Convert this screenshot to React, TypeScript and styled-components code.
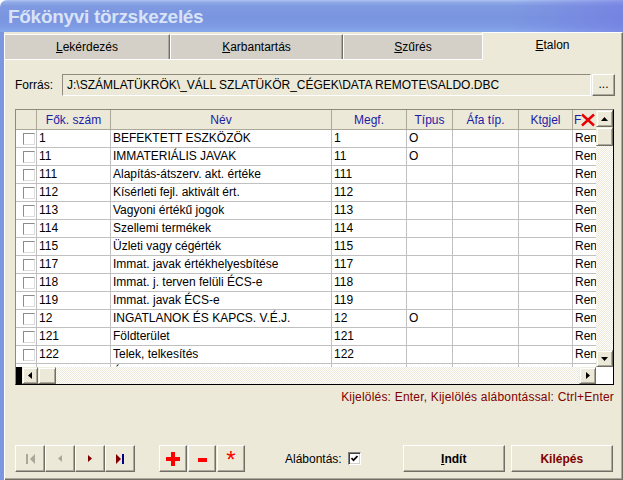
import React from "react";
import styled, { createGlobalStyle } from "styled-components";

const face = "#ece9d8";

const GlobalStyle = createGlobalStyle`
  html, body {
    margin: 0;
    padding: 0;
    background: #ffffff;
  }
  body {
    font-family: "Liberation Sans", Arial, sans-serif;
    font-size: 12px;
    color: #000;
  }
  * {
    box-sizing: border-box;
  }
`;

const Window = styled.div`
  width: 623px;
  height: 480px;
  display: flex;
  flex-direction: column;
  overflow: hidden;
`;

const TitleBar = styled.div`
  flex: none;
  height: 32px;
  display: flex;
  align-items: center;
  padding: 2px 0 0 8px;
  border-top-left-radius: 7px;
  background:
    linear-gradient(to right, rgba(120, 120, 230, 0) 82%, rgba(110, 108, 226, 0.45) 100%),
    linear-gradient(to bottom, #aec3f2 0px, #93ade9 2px, #7f9ae1 6px, #7a95df 18px, #7d9ae3 26px, #88a8ec 32px);
  color: #d9e3f7;
  font: bold 19px "Liberation Sans", Arial, sans-serif;
  letter-spacing: -0.3px;
  white-space: nowrap;
`;

const Body = styled.div`
  flex: 1;
  min-height: 0;
  display: flex;
  flex-direction: column;
  border-left: 4px solid #7b97e0;
  background: ${face};
`;

const TabStrip = styled.div`
  flex: none;
  height: 27px;
  display: flex;
  align-items: flex-end;
`;

const Tab = styled.div<{ $w: number; $active?: boolean; $noRight?: boolean }>`
  width: ${(p) => p.$w}px;
  height: ${(p) => (p.$active ? 28 : 25)}px;
  margin-bottom: ${(p) => (p.$active ? -1 : 0)}px;
  position: relative;
  z-index: ${(p) => (p.$active ? 1 : 0)};
  background: ${(p) => (p.$active ? face : "#d4d0c8")};
  border-top: 1px solid #fff;
  border-left: 1px solid #fff;
  border-right: ${(p) => (p.$noRight ? "none" : "1px solid #716f64")};
  box-shadow: ${(p) => (p.$noRight ? "none" : "inset -1px 0 #aca899")};
  display: flex;
  align-items: center;
  justify-content: center;
  padding-bottom: ${(p) => (p.$active ? 3 : 0)}px;
  font-size: 12px;
`;

const Panel = styled.div`
  flex: 1;
  min-height: 0;
  display: flex;
  flex-direction: column;
  background: ${face};
  border-top: 1px solid #fff;
  border-left: 1px solid #fff;
  box-shadow: inset -1px -1px #716f64, inset -2px -2px #aca899;
  padding: 13px 8px 0 10px;
`;

const SourceRow = styled.div`
  display: flex;
  align-items: center;
  height: 23px;
`;

const SourceLabel = styled.span`
  width: 47px;
  flex: none;
`;

const SourceInput = styled.div`
  width: 530px;
  height: 22px;
  display: flex;
  align-items: center;
  padding-left: 4px;
  background: ${face};
  border: 1px solid;
  border-color: #8e8b7e #fff #fff #8e8b7e;
  white-space: nowrap;
  overflow: hidden;
`;

const Button = styled.button<{ $w: number; $color?: string; $bold?: boolean }>`
  width: ${(p) => p.$w}px;
  height: 27px;
  flex: none;
  margin: 0;
  padding: 0;
  display: flex;
  align-items: center;
  justify-content: center;
  background: ${face};
  border: 1px solid;
  border-color: #fff #716f64 #716f64 #fff;
  box-shadow: inset -1px -1px #aca899;
  font-family: "Liberation Sans", Arial, sans-serif;
  font-size: 12px;
  font-weight: ${(p) => (p.$bold ? "bold" : "normal")};
  color: ${(p) => p.$color || "#000"};
`;

const BrowseButton = styled(Button)`
  height: 22px;
  margin-left: 1px;
  padding-bottom: 2px;
`;

const GridFrame = styled.div`
  margin-top: 13px;
  width: 599px;
  height: 276px;
  flex: none;
  border: 1px solid;
  border-color: #8e8b7e #000 #000 #8e8b7e;
  display: grid;
  grid-template-columns: 1fr 17px;
  grid-template-rows: 1fr 17px;
  background: #fff;
`;

const Viewport = styled.div`
  overflow: hidden;
  min-width: 0;
  min-height: 0;
`;

const cols = "21px 74px 221px 75px 46px 66px 54px 80px";

const HeadRow = styled.div`
  display: grid;
  grid-template-columns: ${cols};
  height: 20px;
  background: ${face};
  border-bottom: 1px solid #aca899;
`;

const HeadCell = styled.div<{ $left?: boolean }>`
  display: flex;
  align-items: center;
  justify-content: ${(p) => (p.$left ? "flex-start" : "center")};
  padding-left: ${(p) => (p.$left ? 1 : 0)}px;
  border-right: 1px solid #aca899;
  color: #1c1ca6;
  white-space: nowrap;
  overflow: hidden;
`;

const Row = styled.div`
  display: grid;
  grid-template-columns: ${cols};
  height: 18px;
`;

const Cell = styled.div`
  border-right: 1px solid #c0c0c0;
  border-bottom: 1px solid #c0c0c0;
  padding-left: 2px;
  line-height: 17px;
  white-space: nowrap;
  overflow: hidden;
`;

const CheckCell = styled(Cell)`
  display: flex;
  align-items: center;
  justify-content: flex-end;
  padding: 0 1px 0 0;
`;

const RowCheck = styled.span`
  width: 12px;
  height: 12px;
  background: #fff;
  border: 1px solid;
  border-color: #8c8c8c #dcdcdc #dcdcdc #8c8c8c;
`;

const VScroll = styled.div`
  display: flex;
  flex-direction: column;
`;

const HScroll = styled.div`
  display: flex;
`;

const Track = styled.div`
  flex: 1;
  background: repeating-conic-gradient(${face} 0% 25%, #fff 0% 50%) 0 0 / 2px 2px;
`;

const ScrollBtn = styled.div<{ $w?: number; $h?: number }>`
  width: ${(p) => p.$w || 17}px;
  height: ${(p) => p.$h || 17}px;
  flex: none;
  background: ${face};
  border: 1px solid;
  border-color: #f1efe2 #716f64 #716f64 #f1efe2;
  box-shadow: inset 1px 1px #fff, inset -1px -1px #aca899;
  display: flex;
  align-items: center;
  justify-content: center;
`;

const HLead = styled.div`
  width: 6px;
  flex: none;
  background: #000;
`;

const Corner = styled.div`
  background: #fff;
`;

const Hint = styled.div`
  margin-top: 5px;
  height: 14px;
  line-height: 14px;
  text-align: right;
  color: #800000;
  padding-right: 1px;
  letter-spacing: 0.2px;
`;

const Footer = styled.div`
  margin-top: 41px;
  height: 27px;
  display: flex;
  align-items: center;
`;

const Group = styled.div<{ $gap?: number; $ml?: number }>`
  display: flex;
  gap: ${(p) => p.$gap || 0}px;
  margin-left: ${(p) => p.$ml || 0}px;
`;

const Star = styled.span`
  color: #ff0000;
  font-size: 24px;
  line-height: 1;
  margin-top: 2px;
`;

const OptionLabel = styled.span`
  margin-left: 40px;
`;

const OptionBox = styled.span`
  width: 13px;
  height: 13px;
  margin-left: 6px;
  background: #fff;
  border: 1px solid;
  border-color: #808080 #fff #fff #808080;
  box-shadow: inset 1px 1px #404040, inset -1px -1px #d4d0c8;
  display: flex;
  align-items: center;
  justify-content: center;
`;

const rows: string[][] = [
  ["1", "BEFEKTETT ESZKÖZÖK", "1", "O"],
  ["11", "IMMATERIÁLIS JAVAK", "11", "O"],
  ["111", "Alapítás-átszerv. akt. értéke", "111", ""],
  ["112", "Kísérleti fejl. aktivált ért.", "112", ""],
  ["113", "Vagyoni értékű jogok", "113", ""],
  ["114", "Szellemi termékek", "114", ""],
  ["115", "Üzleti vagy cégérték", "115", ""],
  ["117", "Immat. javak értékhelyesbítése", "117", ""],
  ["118", "Immat. j. terven felüli ÉCS-e", "118", ""],
  ["119", "Immat. javak ÉCS-e", "119", ""],
  ["12", "INGATLANOK ÉS KAPCS. V.É.J.", "12", "O"],
  ["121", "Földterület", "121", ""],
  ["122", "Telek, telkesítés", "122", ""],
  ["123", "Épületek, épületrészek", "123", ""],
];

const Arrow = ({ dir, color = "#000" }: { dir: "up" | "down" | "left" | "right"; color?: string }) => {
  const pts = {
    up: "0,4 3.5,0 7,4",
    down: "0,0 7,0 3.5,4",
    left: "4,0 0,3.5 4,7",
    right: "0,0 4,3.5 0,7",
  }[dir];
  const horiz = dir === "left" || dir === "right";
  return (
    <svg width={horiz ? 4 : 7} height={horiz ? 7 : 4} viewBox={horiz ? "0 0 4 7" : "0 0 7 4"}>
      <polygon points={pts} fill={color} />
    </svg>
  );
};

const CloseMark = () => (
  <svg width="14" height="14" viewBox="0 0 14 14" style={{ flex: "none" }}>
    <path d="M1 1.5 L13 12.5 M13 1.5 L1 12.5" stroke="#e80000" strokeWidth="2.4" />
  </svg>
);

const App: React.FC = () => {
  return (
    <>
      <GlobalStyle />
      <Window>
        <TitleBar>Főkönyvi törzskezelés</TitleBar>
        <Body>
          <TabStrip>
            <Tab $w={166}>
              <span><u>L</u>ekérdezés</span>
            </Tab>
            <Tab $w={173}>
              <span><u>K</u>arbantartás</span>
            </Tab>
            <Tab $w={139} $noRight>
              <span><u>S</u>zűrés</span>
            </Tab>
            <Tab $w={141} $active>
              <span><u>E</u>talon</span>
            </Tab>
          </TabStrip>
          <Panel>
            <SourceRow>
              <SourceLabel>Forrás:</SourceLabel>
              <SourceInput>J:\SZÁMLATÜKRÖK\_VÁLL SZLATÜKÖR_CÉGEK\DATA REMOTE\SALDO.DBC</SourceInput>
              <BrowseButton $w={23}>...</BrowseButton>
            </SourceRow>

            <GridFrame>
              <Viewport>
                <HeadRow>
                  <HeadCell />
                  <HeadCell>Fők. szám</HeadCell>
                  <HeadCell>Név</HeadCell>
                  <HeadCell>Megf.</HeadCell>
                  <HeadCell>Típus</HeadCell>
                  <HeadCell>Áfa típ.</HeadCell>
                  <HeadCell>Ktgjel</HeadCell>
                  <HeadCell $left>
                    F<CloseMark />
                  </HeadCell>
                </HeadRow>
                {rows.map((r, i) => (
                  <Row key={i}>
                    <CheckCell>
                      <RowCheck />
                    </CheckCell>
                    <Cell>{r[0]}</Cell>
                    <Cell>{r[1]}</Cell>
                    <Cell>{r[2]}</Cell>
                    <Cell>{r[3]}</Cell>
                    <Cell />
                    <Cell />
                    <Cell>Rendes</Cell>
                  </Row>
                ))}
              </Viewport>
              <VScroll>
                <ScrollBtn>
                  <Arrow dir="up" />
                </ScrollBtn>
                <ScrollBtn $h={19} />
                <Track />
                <ScrollBtn>
                  <Arrow dir="down" />
                </ScrollBtn>
              </VScroll>
              <HScroll>
                <HLead />
                <ScrollBtn $w={16}>
                  <Arrow dir="left" />
                </ScrollBtn>
                <ScrollBtn $w={18} />
                <Track />
                <ScrollBtn>
                  <Arrow dir="right" />
                </ScrollBtn>
              </HScroll>
              <Corner />
            </GridFrame>

            <Hint>Kijelölés: Enter, Kijelölés alábontással: Ctrl+Enter</Hint>

            <Footer>
              <Group>
                <Button $w={30}>
                  <svg width="9" height="10" viewBox="0 0 9 10">
                    <rect x="0" y="0" width="2" height="10" fill="#aca899" />
                    <polygon points="9,0 4,5 9,10" fill="#aca899" />
                  </svg>
                </Button>
                <Button $w={30}>
                  <Arrow dir="left" color="#aca899" />
                </Button>
                <Button $w={30}>
                  <Arrow dir="right" color="#800000" />
                </Button>
                <Button $w={30}>
                  <svg width="9" height="10" viewBox="0 0 9 10">
                    <polygon points="0,0 5,5 0,10" fill="#800000" />
                    <rect x="6" y="0" width="2" height="10" fill="#000080" />
                  </svg>
                </Button>
              </Group>
              <Group $gap={1} $ml={24}>
                <Button $w={28}>
                  <svg width="14" height="14" viewBox="0 0 14 14">
                    <rect x="0" y="5" width="14" height="4" fill="#ff0000" />
                    <rect x="5" y="0" width="4" height="14" fill="#ff0000" />
                  </svg>
                </Button>
                <Button $w={28}>
                  <svg width="9" height="4" viewBox="0 0 9 4" style={{ marginTop: 3 }}>
                    <rect x="0" y="0" width="9" height="4" fill="#ff0000" />
                  </svg>
                </Button>
                <Button $w={28}>
                  <Star>*</Star>
                </Button>
              </Group>
              <OptionLabel>Alábontás:</OptionLabel>
              <OptionBox>
                <svg width="7" height="7" viewBox="0 0 7 7">
                  <polyline points="0.5,3 2.5,5.2 6.5,1" fill="none" stroke="#000" strokeWidth="1.7" />
                </svg>
              </OptionBox>
              <Group $gap={6} $ml={42}>
                <Button $w={102} $bold>
                  <span><u>I</u>ndít</span>
                </Button>
                <Button $w={102} $bold $color="#800000">
                  Kilépés
                </Button>
              </Group>
            </Footer>
          </Panel>
        </Body>
      </Window>
    </>
  );
};

export default App;
